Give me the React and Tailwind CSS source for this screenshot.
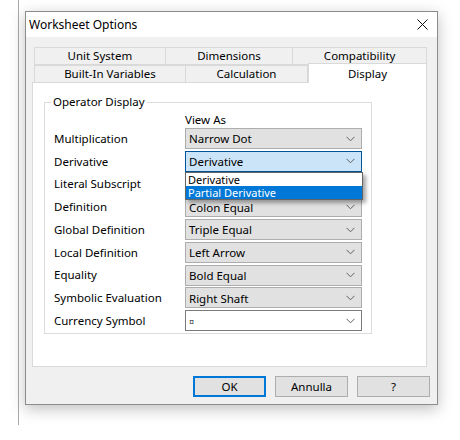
import React from 'react';

const rows = [
  { label: 'Multiplication', value: 'Narrow Dot' },
  { label: 'Derivative', value: 'Derivative', focused: true },
  { label: 'Literal Subscript', value: '' },
  { label: 'Definition', value: 'Colon Equal' },
  { label: 'Global Definition', value: 'Triple Equal' },
  { label: 'Local Definition', value: 'Left Arrow' },
  { label: 'Equality', value: 'Bold Equal' },
  { label: 'Symbolic Evaluation', value: 'Right Shaft' },
  { label: 'Currency Symbol', value: '¤', editable: true },
];

function Chevron() {
  return (
    <svg width="9" height="6" viewBox="0 0 9 6" className="shrink-0">
      <path d="M0.5 0.8 L4.5 4.8 L8.5 0.8" fill="none" stroke="#606060" strokeWidth="1" />
    </svg>
  );
}

function Combo({ row }) {
  let cls = 'bg-[#e1e1e1] border-[#adadad]';
  if (row.focused) cls = 'bg-[#cce4f7] border-[#005499]';
  if (row.editable) cls = 'bg-white border-[#7a7a7a]';
  return (
    <div className={`relative w-[177px] h-[21px] border ${cls} flex items-center justify-between pl-[3px] pr-[6px]`}>
      {row.editable ? (
        <span className="text-[9px] leading-none text-[#333] mt-[2px]">{row.value}</span>
      ) : (
        <span className="leading-none mt-[1px]">{row.value}</span>
      )}
      <Chevron />
      {row.focused && (
        <div className="absolute left-[-1px] top-[20px] w-[178px] z-10 bg-white border border-[#646464] shadow-[3px_3px_4px_rgba(0,0,0,0.35)] flex flex-col text-[11px]">
          <div className="h-[13px] pl-[2px] flex items-center overflow-hidden">
            <span className="leading-none">Derivative</span>
          </div>
          <div className="h-[13px] pl-[2px] flex items-center overflow-hidden bg-[#0078d7] text-white">
            <span className="leading-none">Partial Derivative</span>
          </div>
        </div>
      )}
    </div>
  );
}

function Tab({ label, width, active }) {
  if (active) {
    return (
      <div
        className="h-[20px] -mt-[2px] bg-white border border-b-0 border-[#d9d9d9] flex items-center justify-center relative z-10"
        style={{ width }}
      >
        {label}
      </div>
    );
  }
  return (
    <div
      className="h-[18px] bg-[#f0f0f0] border border-r-0 border-[#d9d9d9] flex items-center justify-center"
      style={{ width }}
    >
      {label}
    </div>
  );
}

function Button({ label, primary }) {
  return (
    <div
      className={`w-[73px] h-[21px] flex items-center justify-center bg-[#e1e1e1] ${
        primary ? 'border-2 border-[#0078d7]' : 'border border-[#adadad]'
      }`}
    >
      {label}
    </div>
  );
}

export default function App() {
  return (
    <div
      className="w-[460px] h-[440px] bg-white flex text-[11.5px] text-black"
      style={{ fontFamily: '"Noto Sans", "Open Sans", sans-serif' }}
    >
      <div className="ml-[18px] w-px h-[425px] bg-[#a9a9a9]" />

      <div className="ml-[6px] mt-[11px] w-[413px] h-[394px] border border-[#8c8c8c] bg-[#f0f0f0] flex flex-col shadow-[0_4px_14px_rgba(0,0,0,0.25)]">
        {/* title bar */}
        <div className="h-[25px] bg-white flex items-center justify-between pl-[3px] pr-[9px] shrink-0">
          <span className="leading-none text-[12px]">Worksheet Options</span>
          <svg width="11" height="11" viewBox="0 0 11 11">
            <path d="M0.5 0.5 L10.5 10.5 M10.5 0.5 L0.5 10.5" stroke="#111" strokeWidth="1" />
          </svg>
        </div>

        <div className="flex flex-col pl-[6px] pt-[10px]">
          {/* tabs */}
          <div className="flex ml-[2px] w-[393px] border-r border-[#d9d9d9]">
            <Tab label="Unit System" width={131} />
            <Tab label="Dimensions" width={128} />
            <Tab label="Compatibility" width={134} />
          </div>
          <div className="flex ml-[2px] -mt-px items-end h-[19px]">
            <Tab label="Built-In Variables" width={151} />
            <div className="h-[18px] w-[123px] bg-[#f0f0f0] border border-[#d9d9d9] flex items-center justify-center">Calculation</div>
            <Tab label="Display" width={119} active />
          </div>

          {/* panel */}
          <div className="-mt-px w-[395px] h-[285px] bg-white border border-[#d9d9d9] pl-[11px] pt-[19px]">
            <div className="relative w-[328px] h-[232px] border border-[#dcdcdc] pl-[9px] pt-[10px]">
              <span className="absolute left-[6px] -top-[9px] bg-white px-[2px] leading-[16px]">Operator Display</span>
              <div className="flex">
                <div className="w-[131px]" />
                <div className="leading-[14px] h-[15px]">View As</div>
              </div>
              <div className="flex flex-col gap-[1.75px]">
                {rows.map((row) => (
                  <div key={row.label} className="flex items-center h-[21px]">
                    <div className="w-[131px] leading-none">{row.label}</div>
                    <Combo row={row} />
                  </div>
                ))}
              </div>
            </div>
          </div>

          {/* buttons */}
          <div className="flex gap-[9px] mt-[9px] ml-[161px]">
            <Button label="OK" primary />
            <Button label="Annulla" />
            <Button label="?" />
          </div>
        </div>
      </div>
    </div>
  );
}
